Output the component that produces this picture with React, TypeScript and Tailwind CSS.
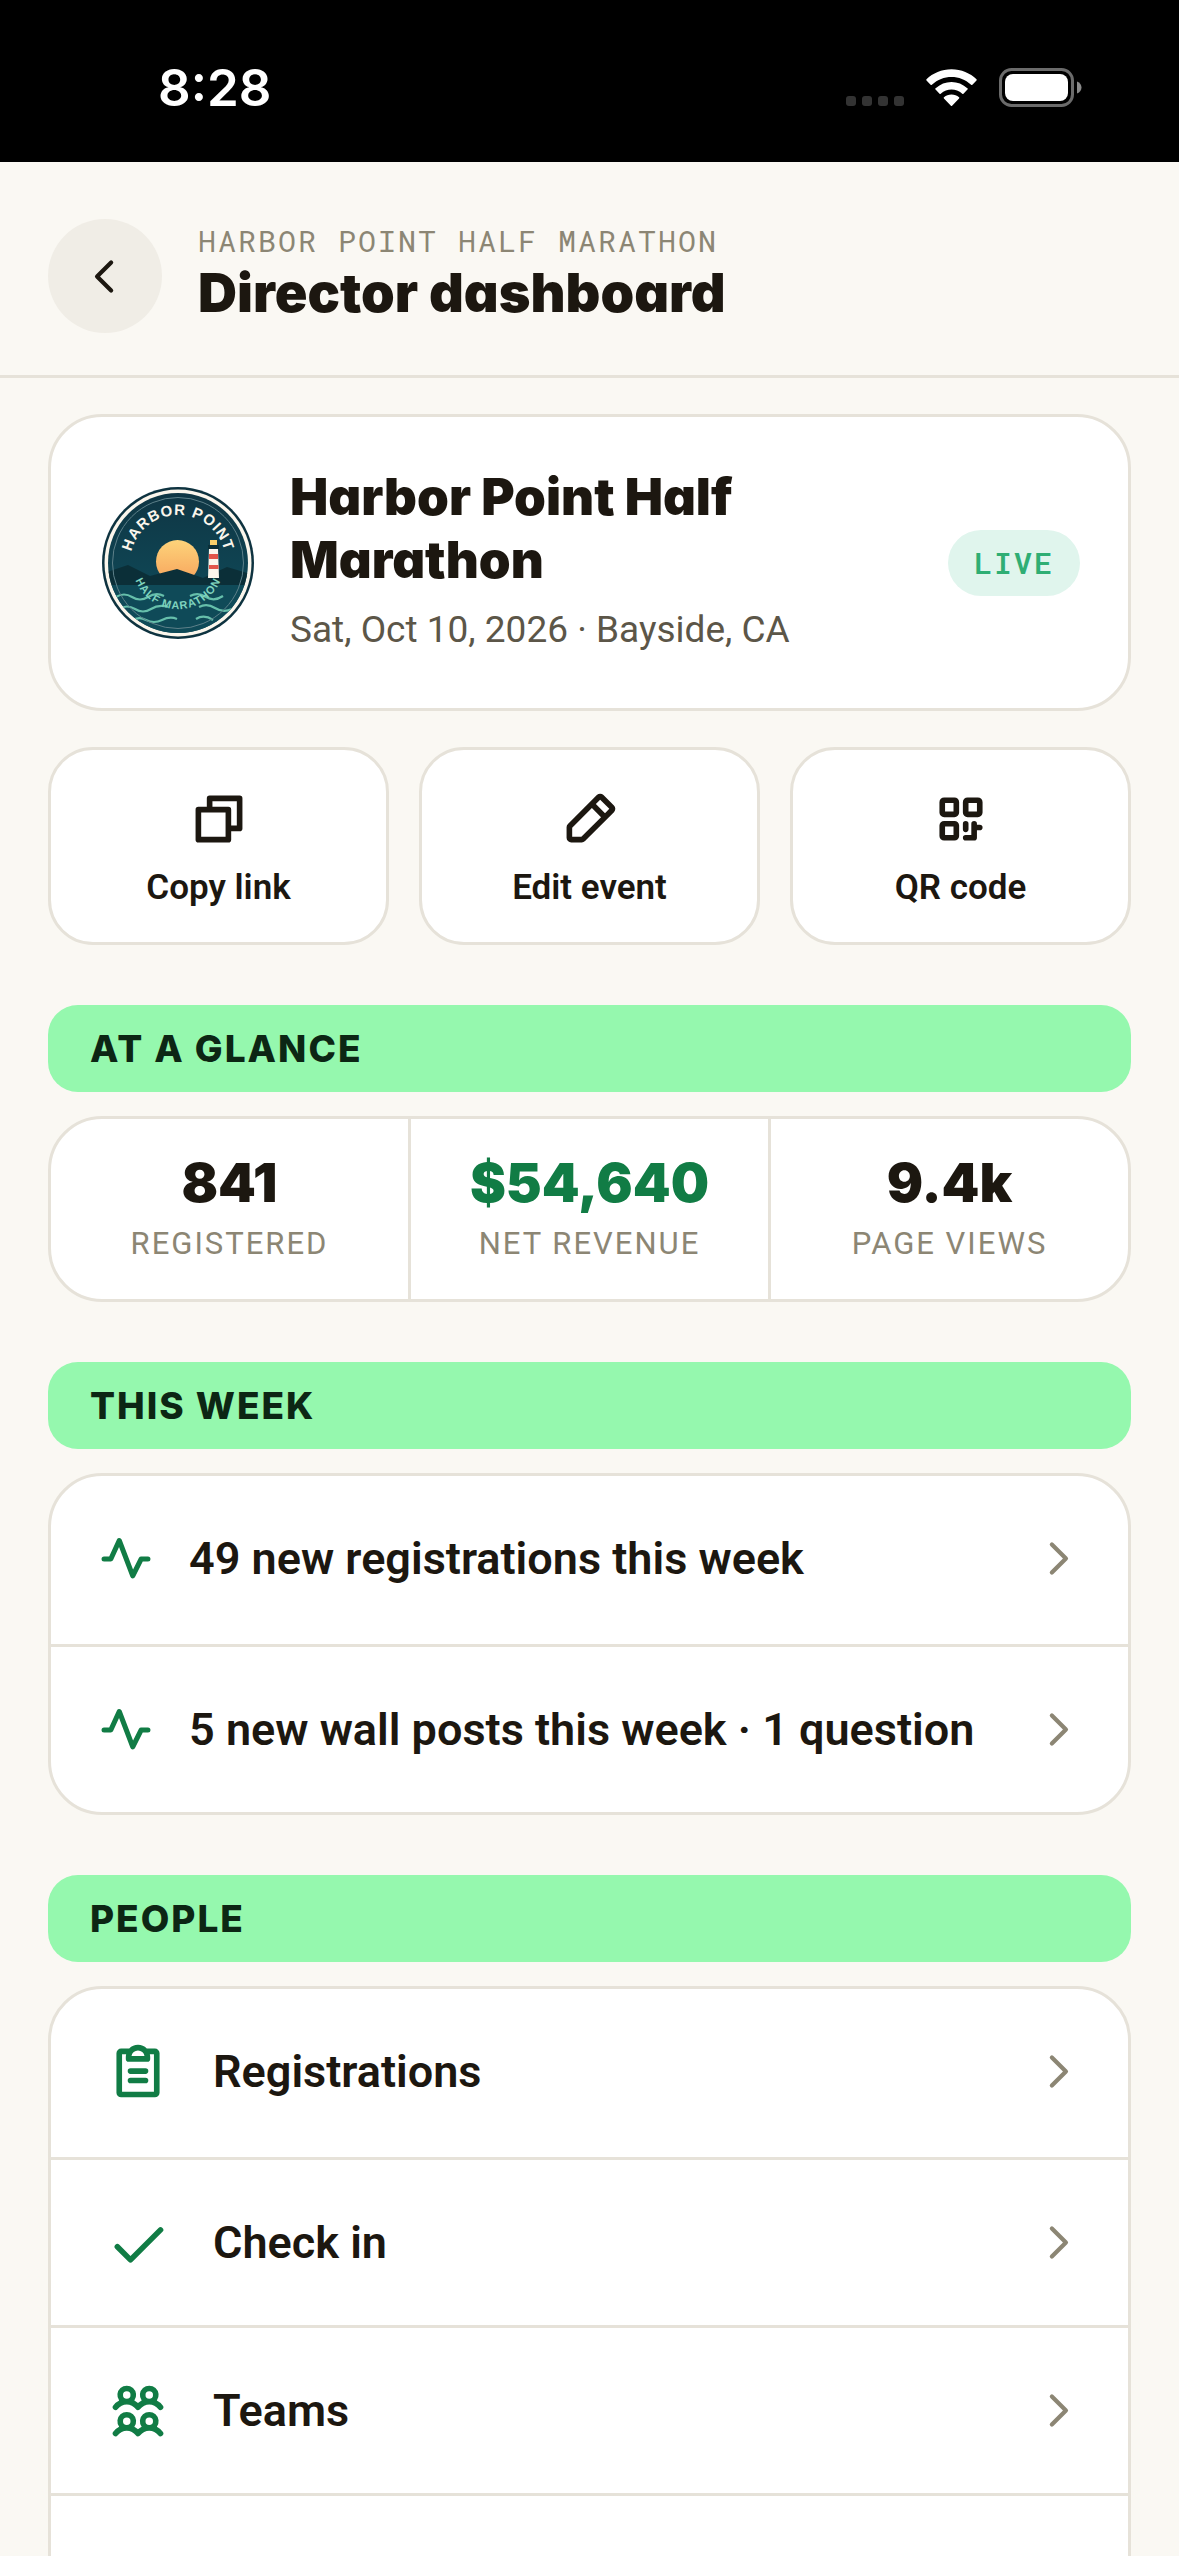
import { useId } from "react";
import type { ReactNode } from "react";
import {
  PiCaretLeftBold,
  PiCaretRightBold,
  PiCheckBold,
  PiClipboardTextBold,
  PiCopyBold,
  PiPencilSimpleBold,
  PiPulseBold,
  PiQrCodeBold,
  PiUsersFourBold,
} from "react-icons/pi";

const display = "font-['Inter',sans-serif] [font-feature-settings:'cv11']";

function StatusBar() {
  return (
    <div className="flex h-[162px] items-center justify-between bg-black pr-[97px] pl-[158px] pt-[13px] text-white">
      <span className="font-['Inter',sans-serif] text-[51px] leading-[60px] font-semibold">8:28</span>
      <div className="flex items-center gap-[22px]">
        <div className="flex gap-[6px] pt-[26px]" aria-label="No signal">
          {[0, 1, 2, 3].map((n) => (
            <span key={n} className="h-[10px] w-[10px] rounded-[3px] bg-[#333333]" />
          ))}
        </div>
        <svg className="h-[38px] w-[51px]" viewBox="0 0 52 38" fill="#fff" aria-label="Wi-Fi">
          <path d="M26 0C36 0 45 4 51.500 10.200Q52 10.700 51.500 11.300L47.300 15.600Q46.700 16.200 46 15.600C40 10.500 33.500 7.800 26 7.800S12 10.500 6 15.600Q5.300 16.200 4.700 15.600L.5 11.300Q0 10.700 .5 10.200C7 4 16 0 26 0Z" />
          <path d="M26 12.800C32 12.800 37.500 15 42.500 19.400Q43 19.900 42.500 20.400L38.200 24.800Q37.500 25.300 37 24.800C33.600 21.900 30 20.500 26 20.500S18.400 21.900 15 24.800Q14.500 25.300 13.800 24.800L9.500 20.400Q9 19.900 9.500 19.400C14.500 15 20 12.800 26 12.800Z" />
          <path d="M26 25.500C29 25.500 31.500 26.500 33.700 28.400Q34.300 29 33.700 29.600L26.600 37Q26 37.600 25.400 37L18.300 29.600Q17.700 29 18.300 28.400C20.500 26.500 23 25.500 26 25.500Z" />
        </svg>
        <svg className="h-[40px] w-[83px]" viewBox="0 0 83 40" aria-label="Battery full">
          <rect x="1.500" y="1.500" width="72" height="36" rx="11" fill="none" stroke="#6b6b6b" strokeWidth="3" />
          <rect x="6" y="6" width="63" height="27" rx="8" fill="#fff" />
          <path d="M78 13.500C81 14.700 82.500 17 82.500 19.500S81 24.300 78 25.500Z" fill="#8a8a8a" />
        </svg>
      </div>
    </div>
  );
}

function Header() {
  return (
    <header className="flex items-center gap-[36px] border-b-[3px] border-[#e6e2d9] px-[48px] pt-[57px] pb-[42px]">
      <button
        type="button"
        aria-label="Back"
        className="flex size-[114px] items-center justify-center rounded-full bg-[#f0ede6] text-[#1c1710]"
      >
        <PiCaretLeftBold className="size-[45px]" />
      </button>
      <div className="flex flex-col pb-[6px]">
        <p className="font-['Roboto_Mono','Liberation_Mono',monospace] text-[30px] leading-[39px] tracking-[2px] text-[#8c8674]">
          HARBOR POINT HALF MARATHON
        </p>
        <h1 className={`${display} text-[54px] leading-[66px] font-black`}>Director dashboard</h1>
      </div>
    </header>
  );
}

function EventLogo() {
  const id = useId();
  return (
    <svg className="size-[152px] shrink-0" viewBox="0 0 152 152" role="img" aria-label="Harbor Point Half Marathon logo">
      <defs>
        <linearGradient id={`${id}sky`} x1="0" y1="0" x2="0" y2="1">
          <stop offset="0" stopColor="#0f3644" />
          <stop offset="1" stopColor="#0f4f5e" />
        </linearGradient>
        <linearGradient id={`${id}sun`} x1="0" y1="0" x2="0" y2="1">
          <stop offset="0" stopColor="#fdd37a" />
          <stop offset="1" stopColor="#f7a35c" />
        </linearGradient>
        <clipPath id={`${id}disc`}>
          <circle cx="76" cy="76" r="70" />
        </clipPath>
        <path id={`${id}top`} d="M28 76A48 48 0 0 1 124 76" />
        <path id={`${id}bottom`} d="M30 76A46 46 0 0 0 122 76" />
      </defs>
      <circle cx="76" cy="76" r="76" fill="#0e3340" />
      <circle cx="76" cy="76" r="73.500" fill="#fbf6ec" />
      <circle cx="76" cy="76" r="70" fill={`url(#${id}sky)`} />
      <g clipPath={`url(#${id}disc)`}>
        <circle cx="75.500" cy="74.500" r="21.500" fill={`url(#${id}sun)`} />
        <path d="M0 87L8 84L26 78L48 89L75 82L101 91L125 80L152 88V100H0Z" fill="#0b2f38" />
        <rect y="98" width="152" height="54" fill="#0f4a58" />
        <rect x="108" y="53" width="7" height="6" fill="#f8cf6a" />
        <path d="M106 58H117V62H106Z" fill="#0b2f38" />
        <path d="M107 62H116L117 91H106Z" fill="#fbf6ec" />
        <path d="M107 67H116V72H107ZM107 78H116.500V82H107Z" fill="#e2554a" />
        <g fill="none" stroke="#66bfab" strokeWidth="2.200">
          <path d="M14 110Q22 105 30 110T46 110T62 109M88 109Q96 105 104 110T121 109" />
          <path d="M17 122Q25 117 33 122T49 122T66 120M97 120Q105 116 113 121T130 122" />
          <path d="M30 134Q36 129 44 133T60 133T75 132M94 132Q102 127 111 133" />
        </g>
      </g>
      <circle cx="76" cy="76" r="65.500" fill="none" stroke="#5d8089" strokeWidth="1" />
      <text fontFamily="Liberation Sans" fontSize="15" fontWeight="700" fill="#fbf6ec" textAnchor="middle" letterSpacing="1">
        <textPath href={`#${id}top`} startOffset="50%">
          HARBOR POINT
        </textPath>
      </text>
      <text fontFamily="Liberation Sans" fontSize="11" fontWeight="700" fill="#7fd3be" textAnchor="middle" letterSpacing="1">
        <textPath href={`#${id}bottom`} startOffset="50%">
          HALF MARATHON
        </textPath>
      </text>
    </svg>
  );
}

function EventCard() {
  return (
    <section className="flex items-center gap-[36px] rounded-[54px] border-[3px] border-[#e6e2d9] bg-white py-[48px] pr-[48px] pl-[51px]">
      <EventLogo />
      <div className="min-w-0 flex-1 pb-[3px]">
        <h2 className={`${display} text-[51px] leading-[63px] font-black`}>
          Harbor Point Half
          <br />
          Marathon
        </h2>
        <p className="mt-[12px] text-[37px] leading-[54px] text-[#5c5648]">Sat, Oct 10, 2026 · Bayside, CA</p>
      </div>
      <span className="rounded-full bg-[#e0f5ed] px-[26px] py-[15px] font-['Roboto_Mono','Liberation_Mono',monospace] text-[30px] leading-[36px] font-semibold tracking-[2px] text-[#2fae74]">
        LIVE
      </span>
    </section>
  );
}

function ActionButton({ icon, label }: { icon: ReactNode; label: string }) {
  return (
    <button
      type="button"
      className="flex flex-col items-center gap-[16px] rounded-[45px] border-[3px] border-[#e6e2d9] bg-white pt-[39px] pb-[32px]"
    >
      {icon}
      <span className="text-[35px] leading-[45px] font-semibold">{label}</span>
    </button>
  );
}

function SectionTitle({ children }: { children: ReactNode }) {
  return (
    <h2 className={`${display} rounded-[30px] bg-[#95f8ae] px-[42px] py-[21px] text-[37px] leading-[45px] font-extrabold tracking-[2px] text-[#0c2614]`}>
      {children}
    </h2>
  );
}

function Stat({ value, label, tone }: { value: string; label: string; tone: string }) {
  return (
    <div className="flex flex-1 flex-col items-center pt-[29px] pb-[34px]">
      <span className={`${display} ${tone} text-[54px] leading-[69px] font-black`}>{value}</span>
      <span className="mt-[6px] text-[31px] leading-[42px] tracking-[2px] text-[#8c8674]">{label}</span>
    </div>
  );
}

function WeekRow({ label }: { label: string }) {
  return (
    <li className="first:pb-[3px]">
      <a href="#" className="flex items-center gap-[36px] px-[48px] py-[54px]">
        <PiPulseBold className="size-[54px] text-[#117c45]" />
        <span className="flex-1 text-[45px] leading-[57px] font-semibold">{label}</span>
        <PiCaretRightBold className="size-[45px] text-[#8c8674]" />
      </a>
    </li>
  );
}

function PeopleRow({ icon, label }: { icon: ReactNode; label: string }) {
  return (
    <li className="first:pb-[3px]">
      <a href="#" className="flex items-center gap-[45px] py-[54px] pr-[48px] pl-[57px]">
        <span className="-my-[3px] text-[#117c45]">{icon}</span>
        <span className="flex-1 text-[45px] leading-[57px] font-semibold">{label}</span>
        <PiCaretRightBold className="size-[45px] text-[#8c8674]" />
      </a>
    </li>
  );
}

const list = "divide-y-[3px] divide-[#e6e2d9] rounded-[54px] border-[3px] border-[#e6e2d9] bg-white";

export default function App() {
  return (
    <div className="h-screen overflow-hidden bg-[#faf8f3] font-['Roboto',sans-serif] text-[#1c1710]">
      <StatusBar />
      <Header />
      <main className="flex flex-col px-[48px] pt-[36px]">
        <EventCard />
        <div className="mt-[36px] grid grid-cols-3 gap-[30px]">
          <ActionButton icon={<PiCopyBold className="size-[60px]" />} label="Copy link" />
          <ActionButton icon={<PiPencilSimpleBold className="size-[60px]" />} label="Edit event" />
          <ActionButton icon={<PiQrCodeBold className="size-[60px]" />} label="QR code" />
        </div>

        <section className="mt-[60px] flex flex-col gap-[24px]">
          <SectionTitle>AT A GLANCE</SectionTitle>
          <div className="flex divide-x-[3px] divide-[#e6e2d9] rounded-[54px] border-[3px] border-[#e6e2d9] bg-white">
            <Stat value="841" label="REGISTERED" tone="text-[#1c1710]" />
            <Stat value="$54,640" label="NET REVENUE" tone="text-[#117c45]" />
            <Stat value="9.4k" label="PAGE VIEWS" tone="text-[#1c1710]" />
          </div>
        </section>

        <section className="mt-[60px] flex flex-col gap-[24px]">
          <SectionTitle>THIS WEEK</SectionTitle>
          <ul className={list}>
            <WeekRow label="49 new registrations this week" />
            <WeekRow label="5 new wall posts this week · 1 question" />
          </ul>
        </section>

        <section className="mt-[60px] flex flex-col gap-[24px]">
          <SectionTitle>PEOPLE</SectionTitle>
          <ul className={list}>
            <PeopleRow icon={<PiClipboardTextBold className="size-[60px]" />} label="Registrations" />
            <PeopleRow icon={<PiCheckBold className="size-[60px]" />} label="Check in" />
            <PeopleRow icon={<PiUsersFourBold className="size-[60px]" />} label="Teams" />
            <li className="h-[165px]" />
          </ul>
        </section>
      </main>
    </div>
  );
}
